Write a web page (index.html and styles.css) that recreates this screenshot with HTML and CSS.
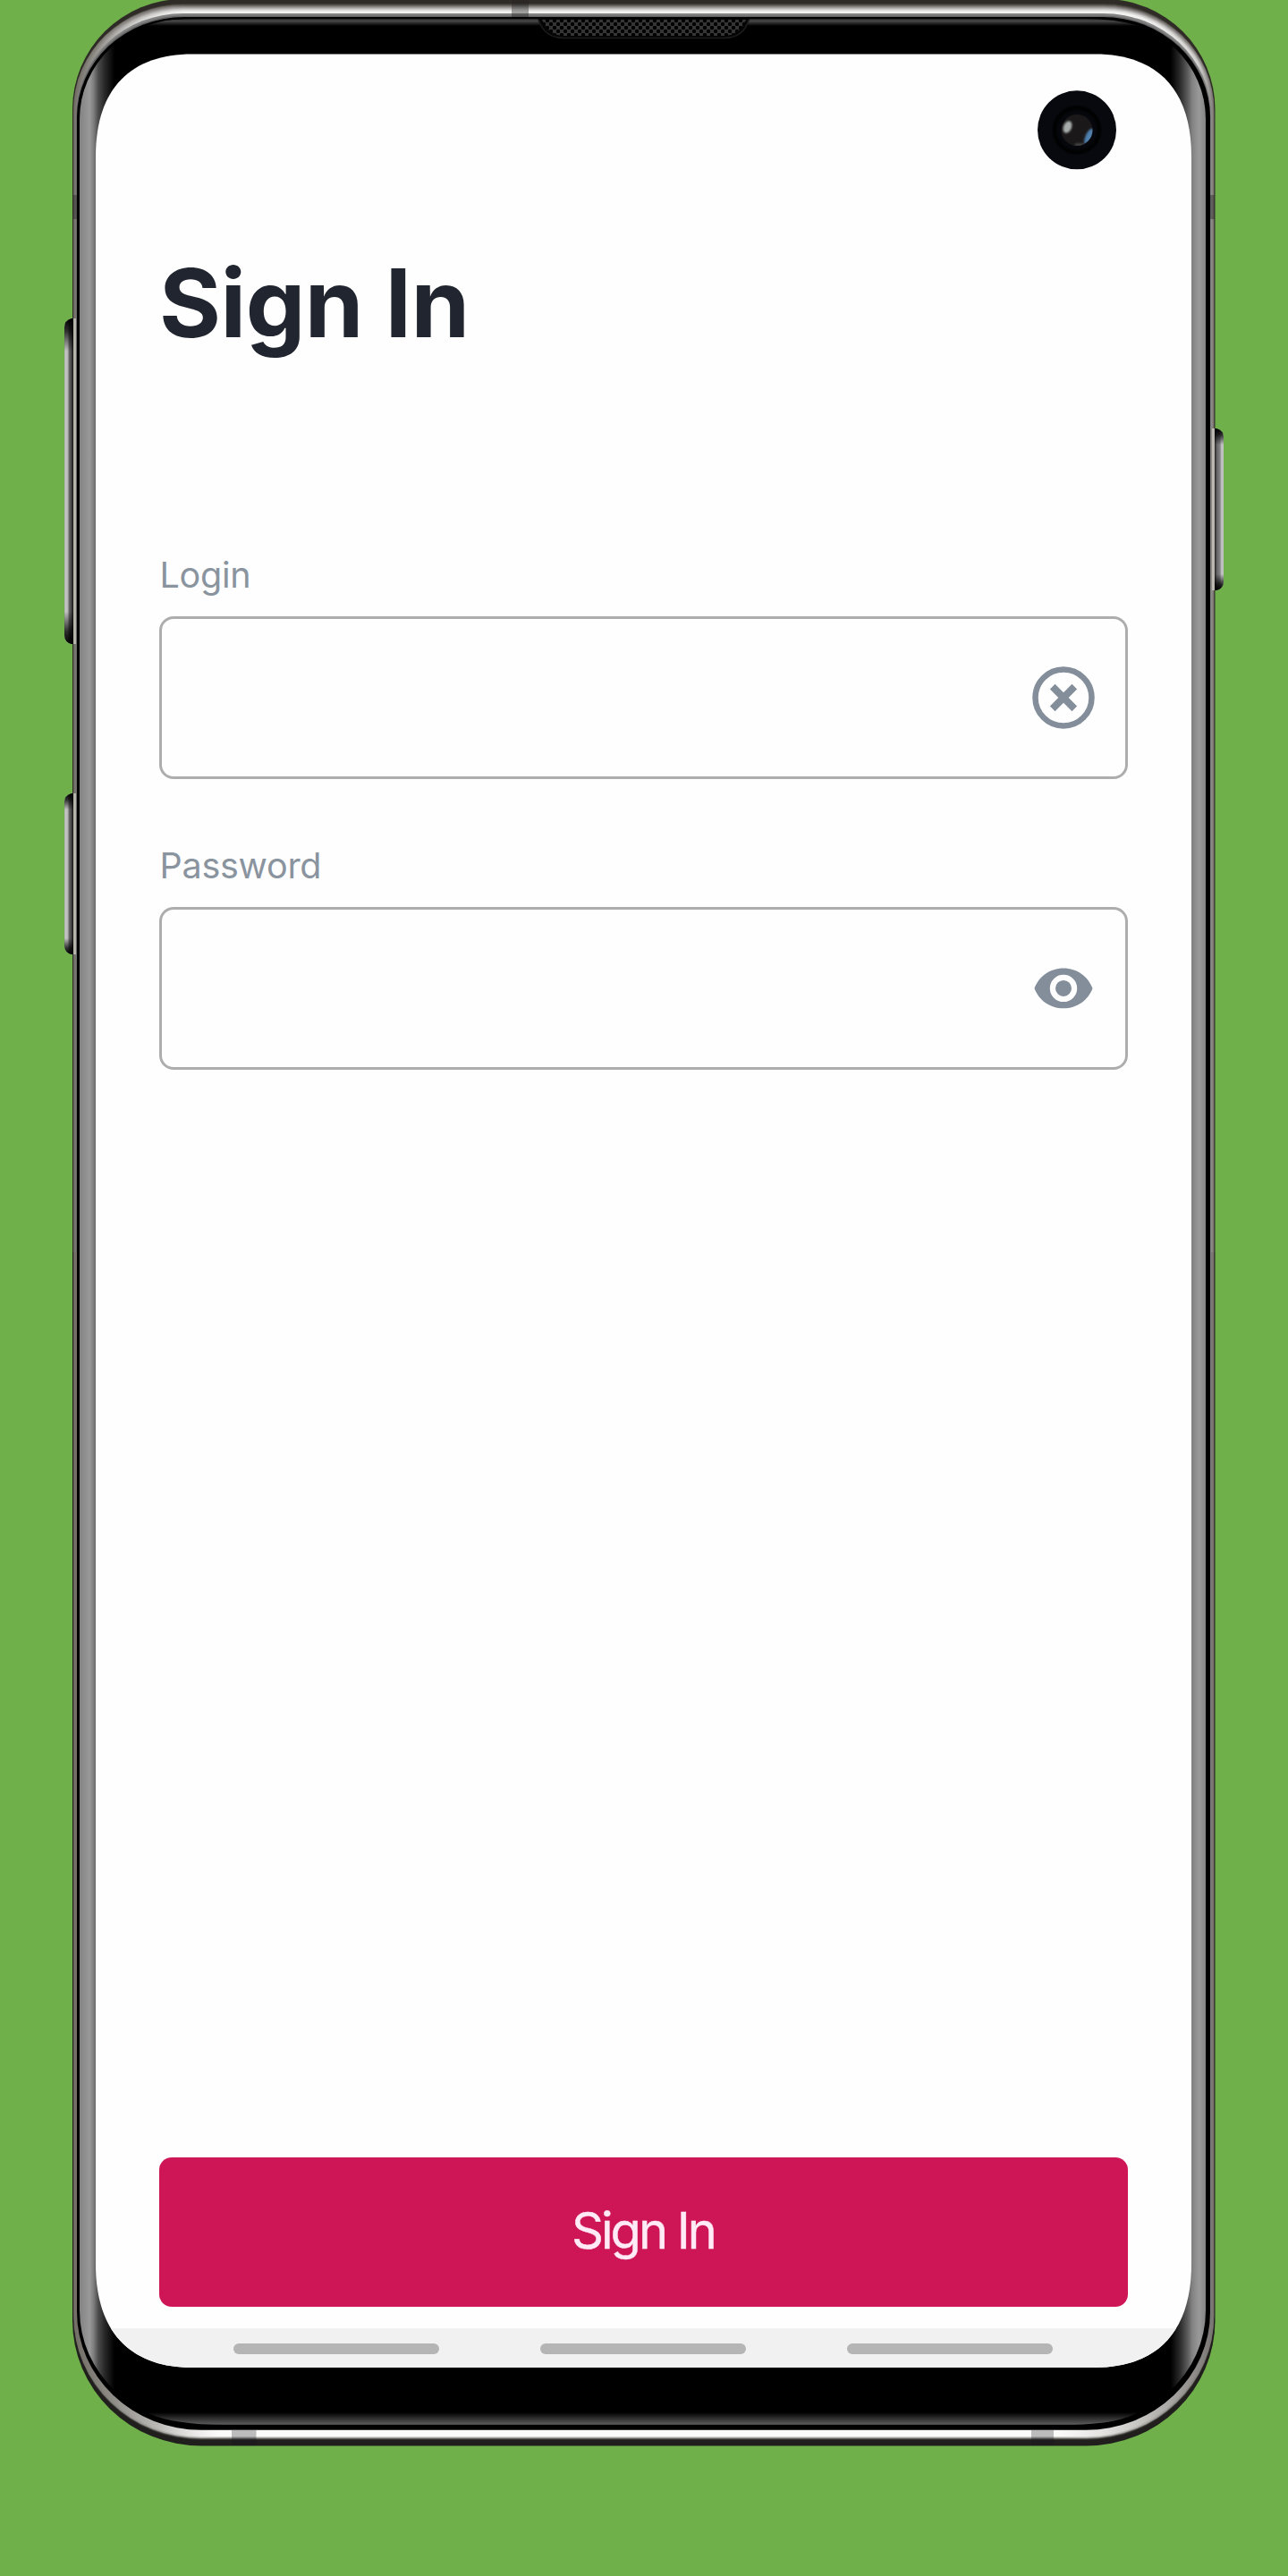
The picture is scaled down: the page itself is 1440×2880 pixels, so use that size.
FILE: index.html
```html
<!DOCTYPE html>
<html lang="en">
<head>
<meta charset="utf-8">
<title>Sign In</title>
<link rel="stylesheet" href="styles.css">
</head>
<body>
<div class="stage">
  <svg class="device" width="1440" height="2880" viewBox="0 0 1440 2880" aria-hidden="true">
    <defs>
      <linearGradient id="sideMetal" gradientUnits="userSpaceOnUse" x1="81" y1="0" x2="1358" y2="0">
        <stop offset="0" stop-color="#716d65"/>
        <stop offset=".03" stop-color="#8d8a84" stop-opacity=".75"/>
        <stop offset=".06" stop-color="#a5a29f" stop-opacity=".4"/>
        <stop offset=".1" stop-color="#c5c2be" stop-opacity="0"/>
        <stop offset=".93" stop-color="#c5c2be" stop-opacity="0"/>
        <stop offset=".985" stop-color="#a5a29f" stop-opacity=".4"/>
        <stop offset="1" stop-color="#777370"/>
      </linearGradient>
      <linearGradient id="sideMetalLow" gradientUnits="userSpaceOnUse" x1="81" y1="0" x2="1358" y2="0">
        <stop offset="0" stop-color="#716d65"/>
        <stop offset=".035" stop-color="#86837d" stop-opacity=".92"/>
        <stop offset=".075" stop-color="#a5a29f" stop-opacity=".75"/>
        <stop offset=".13" stop-color="#d5d2d0" stop-opacity="0"/>
        <stop offset=".86" stop-color="#d5d2d0" stop-opacity="0"/>
        <stop offset=".93" stop-color="#b0adaa" stop-opacity=".65"/>
        <stop offset=".97" stop-color="#8d8a88" stop-opacity=".85"/>
        <stop offset="1" stop-color="#777370"/>
      </linearGradient>
      <linearGradient id="glassSides" gradientUnits="userSpaceOnUse" x1="89" y1="0" x2="1348" y2="0">
        <stop offset="0" stop-color="#838383"/>
        <stop offset=".009" stop-color="#999"/>
        <stop offset=".0125" stop-color="#7d7d7d"/>
        <stop offset=".0165" stop-color="#4c4c4c"/>
        <stop offset=".022" stop-color="#292929"/>
        <stop offset=".031" stop-color="#000"/>
        <stop offset=".969" stop-color="#000"/>
        <stop offset=".977" stop-color="#2a2a2a"/>
        <stop offset=".984" stop-color="#5c5c5c"/>
        <stop offset=".988" stop-color="#828282"/>
        <stop offset=".994" stop-color="#999"/>
        <stop offset="1" stop-color="#858585"/>
      </linearGradient>
      <linearGradient id="glowTop" x1="0" y1="0" x2="0" y2="1">
        <stop offset="0" stop-color="#222"/>
        <stop offset=".3" stop-color="#484848"/>
        <stop offset="1" stop-color="#000"/>
      </linearGradient>
      <linearGradient id="glowBottom" x1="0" y1="0" x2="0" y2="1">
        <stop offset="0" stop-color="#000"/>
        <stop offset=".9" stop-color="#555"/>
        <stop offset="1" stop-color="#444"/>
      </linearGradient>
      <linearGradient id="keyEnds" x1="0" y1="0" x2="0" y2="1">
        <stop offset="0" stop-color="#000"/>
        <stop offset=".04" stop-color="#000" stop-opacity=".75"/>
        <stop offset=".1" stop-color="#000" stop-opacity="0"/>
        <stop offset=".9" stop-color="#000" stop-opacity="0"/>
        <stop offset=".96" stop-color="#000" stop-opacity=".75"/>
        <stop offset="1" stop-color="#000"/>
      </linearGradient>
      <linearGradient id="keyLeft" x1="0" y1="0" x2="1" y2="0">
        <stop offset="0" stop-color="#aaa"/>
        <stop offset=".15" stop-color="#c5c5c5"/>
        <stop offset=".4" stop-color="#b5b5b5"/>
        <stop offset=".5" stop-color="#6a6a6a"/>
        <stop offset=".75" stop-color="#4a4a4a"/>
        <stop offset="1" stop-color="#111"/>
      </linearGradient>
      <linearGradient id="keyRight" x1="0" y1="0" x2="1" y2="0">
        <stop offset="0" stop-color="#222"/>
        <stop offset=".25" stop-color="#626262"/>
        <stop offset=".6" stop-color="#858388"/>
        <stop offset=".75" stop-color="#bbb"/>
        <stop offset="1" stop-color="#c5c3c6"/>
      </linearGradient>
      <radialGradient id="lensRing">
        <stop offset="0" stop-color="#090a12"/>
        <stop offset=".7" stop-color="#06070c"/>
        <stop offset=".88" stop-color="#000"/>
        <stop offset="1" stop-color="#090a11"/>
      </radialGradient>
      <pattern id="mesh" width="8" height="8" patternUnits="userSpaceOnUse" x="602" y="21">
        <rect width="8" height="8" fill="#363636"/>
        <circle cx="2" cy="2" r="2.200"/><circle cx="6" cy="6" r="2.200"/>
      </pattern>
      <clipPath id="upper"><rect x="60" y="0" width="1320" height="1400"/></clipPath>
      <clipPath id="lower"><rect x="60" y="1400" width="1320" height="1400"/></clipPath>
      <clipPath id="glassUpper"><rect x="89" y="21" width="1259" height="2690" rx="118" ry="112"/></clipPath>
      <clipPath id="glassLower"><rect x="89" y="21" width="1259" height="2690" rx="137" ry="128"/></clipPath>
      <clipPath id="lens"><circle cx="1204" cy="145.500" r="17.500"/></clipPath>
      <filter id="soft" x="-50%" y="-50%" width="200%" height="200%"><feGaussianBlur stdDeviation="1.3"/></filter>
    </defs>

    <!-- metal band, upper half -->
    <g clip-path="url(#upper)">
      <rect x="81" y="-1" width="1277.500" height="2735" rx="124" ry="123" fill="#2f2b26"/>
      <rect x="82" y="4" width="1275.500" height="2730" rx="123" ry="119" fill="#403c36"/>
      <rect x="82.300" y="5" width="1275" height="2730" rx="123" ry="118" fill="#54504b"/>
      <rect x="82.600" y="6" width="1274.400" height="2730" rx="122" ry="118" fill="#6c6864"/>
      <rect x="82.900" y="7" width="1273.800" height="2730" rx="122" ry="117" fill="#858280"/>
      <rect x="83.200" y="8" width="1273.200" height="2730" rx="122" ry="117" fill="#9d9a99"/>
      <rect x="83.400" y="9" width="1272.800" height="2730" rx="122" ry="116" fill="#b5b3b2"/>
      <rect x="83.600" y="10" width="1272.400" height="2730" rx="121" ry="116" fill="#cccac9"/>
      <rect x="83.800" y="11" width="1272" height="2730" rx="121" ry="115" fill="#dddcda"/>
      <rect x="84" y="12" width="1271.600" height="2730" rx="121" ry="115" fill="#ebebe8"/>
      <rect x="84.200" y="13" width="1271.200" height="2730" rx="120" ry="114" fill="#f2f2f0"/>
      <rect x="82.200" y="5" width="1275" height="2730" rx="122" ry="118" fill="url(#sideMetal)"/>
      <rect x="84.800" y="15" width="1269" height="2730" rx="120" ry="113" fill="#828282"/>
      <rect x="85.200" y="17.500" width="1268" height="2730" rx="120" ry="112" fill="#666"/>
      <rect x="86" y="19" width="1267" height="2730" rx="120" ry="112"/>
      <g clip-path="url(#glassUpper)">
        <rect x="89" y="21" width="1259" height="1400" fill="url(#glassSides)"/>
        <path d="M145 29Q175 21 225 21H1215Q1245 21 1275 29Z" fill="url(#glowTop)"/>
      </g>
    </g>
    <!-- metal band, lower half -->
    <g clip-path="url(#lower)">
      <rect x="81" y="0" width="1277.500" height="2734.500" rx="144" ry="140" fill="#211f1d"/>
      <rect x="82" y="0" width="1275.500" height="2728" rx="143" ry="138" fill="#353431"/>
      <rect x="82.500" y="0" width="1274.500" height="2727" rx="142" ry="138" fill="#63625e"/>
      <rect x="83" y="0" width="1273.500" height="2726" rx="142" ry="137" fill="#a3a29e"/>
      <rect x="83.500" y="0" width="1272.500" height="2725" rx="141" ry="137" fill="#d5d5d2"/>
      <rect x="84" y="0" width="1271.500" height="2724" rx="141" ry="136" fill="#fbfbf9"/>
      <rect x="82.300" y="0" width="1275" height="2726" rx="142" ry="137" fill="url(#sideMetalLow)"/>
      <rect x="86" y="0" width="1267" height="2716.700" rx="139" ry="132"/>
      <g clip-path="url(#glassLower)">
        <rect x="89" y="1400" width="1259" height="1311" fill="url(#glassSides)"/>
        <path d="M160 2697H1282Q1245 2711 1190 2711H250Q195 2711 160 2697Z" fill="url(#glowBottom)"/>
      </g>
    </g>

    <!-- antenna bands -->
    <g fill="#222" fill-opacity=".4">
      <rect x="81" y="218" width="5" height="27"/>
      <rect x="1353" y="218" width="5" height="27"/>
      <rect x="572" y="0" width="19" height="19"/>
    </g>
    <g fill="#14141c" fill-opacity=".27">
      <rect x="259" y="2717" width="27.500" height="17"/>
      <rect x="1153" y="2717" width="25" height="17"/>
    </g>

    <!-- side keys -->
    <g id="volume">
      <path d="M82 356H80Q72 358 72 366V710Q72 718 80 720H82Z" fill="url(#keyLeft)"/>
      <path d="M82 356H80Q72 358 72 366V710Q72 718 80 720H82Z" fill="url(#keyEnds)"/>
      <rect x="82" y="356" width="3" height="364" fill="#b5b4aa"/>
      <path d="M82 887H80Q72 889 72 897V1057Q72 1065 80 1067H82Z" fill="url(#keyLeft)"/>
      <path d="M82 887H80Q72 889 72 897V1057Q72 1065 80 1067H82Z" fill="url(#keyEnds)"/>
      <rect x="82" y="887" width="3" height="180" fill="#b5b4aa"/>
    </g>
    <g id="power">
      <path d="M1358 479H1360Q1368 481 1368 489V650Q1368 658 1360 660H1358Z" fill="url(#keyRight)"/>
      <path d="M1358 479H1360Q1368 481 1368 489V650Q1368 658 1360 660H1358Z" fill="url(#keyEnds)"/>
      <rect x="1355" y="479" width="3" height="181" fill="#bab8b0"/>
    </g>

    <!-- earpiece -->
    <path d="M601.500 21H838C834 36 822 42.800 810 42.800H630C615 42.800 605 34 601.500 21Z" fill="#050505"/>
    <path d="M606 22H834C829 34 822 39.500 809 40H631C618 39.500 611 34 606 22Z" fill="url(#mesh)"/>
    <path d="M602 22C606 35 616 42.400 630 42.400H810C824 42.400 834 35 837 22" fill="none" stroke="#1c1c1c" stroke-width="1.500"/>
  </svg>

  <main class="screen">
    <form class="form">
      <h1 class="title">Sign In</h1>
      <div class="field">
        <label class="label" for="login">Login</label>
        <div class="box">
          <input class="input" id="login" type="text">
          <svg class="icon" viewBox="0 0 70 70" aria-hidden="true">
            <circle cx="35" cy="35" r="31.500" fill="none" stroke="#838e9a" stroke-width="6.500"/>
            <path d="M22.700 22.700L47.300 47.300M47.300 22.700L22.700 47.300" stroke="#838e9a" stroke-width="8"/>
          </svg>
        </div>
      </div>
      <div class="field">
        <label class="label" for="password">Password</label>
        <div class="box">
          <input class="input" id="password" type="password">
          <svg class="icon" viewBox="0 0 70 70" aria-hidden="true">
            <path fill="#838e9a" fill-rule="evenodd" d="M35 12.500C50 12.500 62.500 21.600 67.500 35C62.500 48.400 50 57.300 35 57.300S7.500 48.400 2.500 35C7.500 21.600 20 12.500 35 12.500ZM35 19.700A15.200 15.200 0 1 0 35 50.100A15.200 15.200 0 1 0 35 19.700ZM35 25.900A9 9 0 1 1 35 43.900A9 9 0 1 1 35 25.900Z"/>
          </svg>
        </div>
      </div>
      <button class="submit" type="button">Sign In</button>
    </form>
    <nav class="navbar"><span class="pill"></span><span class="pill"></span><span class="pill"></span></nav>
  </main>

  <svg class="camera" width="90" height="90" viewBox="1159 100 90 90" aria-hidden="true">
    <circle cx="1204" cy="145.300" r="44" fill="#08090e"/>
    <circle cx="1204" cy="145.300" r="29" fill="url(#lensRing)"/>
    <circle cx="1204" cy="145.500" r="17.500" fill="#1b1819"/>
    <g clip-path="url(#lens)" filter="url(#soft)">
      <ellipse cx="1193.500" cy="142" rx="4.500" ry="7" transform="rotate(22 1193.500 142)" fill="#a6adac"/>
      <ellipse cx="1218" cy="153" rx="4.500" ry="10" transform="rotate(24 1218 153)" fill="#4f7fac"/>
      <ellipse cx="1207" cy="162" rx="6" ry="2" fill="#444"/>
    </g>
  </svg>
</div>
</body>
</html>
```
FILE: styles.css
```css
* { box-sizing: border-box; }

body {
  margin: 0;
  background: #6fb04a;
  font-family: Inter, "Liberation Sans", sans-serif;
}

.stage {
  position: relative;
  width: 1440px;
  height: 2880px;
  padding: 60px 108px 0 107px;
  overflow: hidden;
}

.device {
  position: absolute;
  left: 0;
  top: 0;
}

.camera {
  position: absolute;
  left: 1159px;
  top: 100px;
}

.screen {
  position: relative;
  display: flex;
  flex-direction: column;
  height: 2587px;
  background: #fefefe;
  clip-path: path("M0 115C0 38 40 .500 108 .500H1117C1185 .500 1225 38 1225 115V2471.500C1225 2548.500 1185 2587 1117 2587H108C40 2587 0 2548.500 0 2471.500Z");
}

.form {
  flex: 1;
  display: flex;
  flex-direction: column;
  padding: 215px 71px 24px;
}

.title {
  margin: 0 0 212px;
  font-size: 105.5px;
  line-height: 128px;
  font-weight: 700;
  letter-spacing: -.5px;
  color: #20252f;
}

.field {
  display: flex;
  flex-direction: column;
  height: 256px;
  margin-bottom: 69px;
}

.label {
  height: 74px;
  padding: 3.5px 0 0 .5px;
  font-size: 39.5px;
  line-height: 48px;
  letter-spacing: -.25px;
  color: #8a949f;
}

.box {
  display: flex;
  align-items: center;
  height: 182px;
  padding: 0 34px 1px 0;
  border: 3px solid #adadad;
  border-radius: 16px;
}

.input {
  flex: 1;
  height: 100%;
  padding: 0 36px;
  border: 0;
  outline: 0;
  background: transparent;
  font: 48px Inter, sans-serif;
}

.icon {
  width: 70px;
  height: 70px;
}

.submit {
  height: 167px;
  margin-top: auto;
  padding: 0 1px 2px 0;
  border: 0;
  border-radius: 14px;
  background: #ce1657;
  color: #ffeaf5;
  font: 400 56px/165px Inter, sans-serif;
  letter-spacing: -3px;
  -webkit-text-stroke: .4px #ffeaf5;
}

.navbar {
  display: flex;
  justify-content: center;
  gap: 113.5px;
  height: 44px;
  padding: 17px 1px 0 0;
  background: #f1f1f1;
}

.pill {
  width: 229.5px;
  height: 11.5px;
  border-radius: 6px;
  background: #b5b5b5;
}
```
